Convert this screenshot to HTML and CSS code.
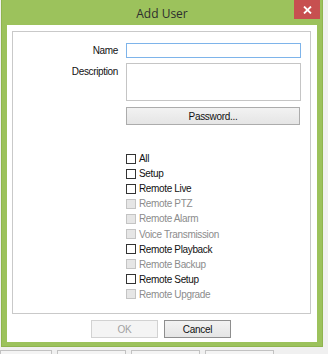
FILE: index.html
```html
<!DOCTYPE html>
<html>
<head>
<meta charset="utf-8">
<link rel="stylesheet" href="styles.css">
</head>
<body>
<div class="screen">
  <div class="window">
    <div class="titlebar">
      <span class="title">Add User</span>
      <div class="close">
        <svg width="9" height="8" viewBox="0 0 9 8"><path d="M1 0.5 L8 7.5 M8 0.5 L1 7.5" stroke="#fff" stroke-width="1.8"/></svg>
      </div>
    </div>
    <div class="client">
      <div class="panel">
        <div class="form">
          <label class="lbl lbl-name">Name</label>
          <div class="input focus"></div>
          <label class="lbl lbl-desc">Description</label>
          <div class="textarea"></div>
          <span></span>
          <button class="btn pwd">Password...</button>
        </div>
        <ul class="checks">
          <li class="chk"><span class="box"></span>All</li>
          <li class="chk"><span class="box"></span>Setup</li>
          <li class="chk"><span class="box"></span>Remote Live</li>
          <li class="chk off"><span class="box"></span>Remote PTZ</li>
          <li class="chk off"><span class="box"></span>Remote Alarm</li>
          <li class="chk off"><span class="box"></span>Voice Transmission</li>
          <li class="chk"><span class="box"></span>Remote Playback</li>
          <li class="chk off"><span class="box"></span>Remote Backup</li>
          <li class="chk"><span class="box"></span>Remote Setup</li>
          <li class="chk off"><span class="box"></span>Remote Upgrade</li>
        </ul>
      </div>
      <div class="actions">
        <button class="btn ok" disabled>OK</button>
        <button class="btn cancel">Cancel</button>
      </div>
    </div>
  </div>
  <div class="bgbar">
    <span class="bgbtn b1"></span>
    <span class="bgbtn b2"></span>
    <span class="bgbtn b3"></span>
    <span class="bgbtn b4"></span>
  </div>
</div>
</body>
</html>
```
FILE: styles.css
```css
* { box-sizing: border-box; }
html, body { margin: 0; padding: 0; }
body {
  width: 328px;
  height: 354px;
  overflow: hidden;
  background: #f0f0f0;
  font-family: "Liberation Sans", "DejaVu Sans", sans-serif;
  font-size: 10px;
  letter-spacing: -0.35px;
  color: #111;
}
.screen { position: relative; width: 328px; height: 354px; }
.window {
  margin-left: 1px;
  width: 322px;
  height: 347px;
  background: #9cc25c;
  border: 1px solid #8fb44f;
  border-top: none;
  padding: 0 5px 4px 5px;
  display: flex;
  flex-direction: column;
  position: relative;
}
.titlebar {
  height: 25px;
  display: flex;
  align-items: center;
  justify-content: center;
}
.title {
  font-family: "Open Sans", "Noto Sans", sans-serif;
  font-size: 12px;
  letter-spacing: 0;
  color: #2e2e2e;
  margin-top: 1px;
}
.close {
  position: absolute;
  left: 292px;
  top: 0;
  width: 26px;
  height: 19px;
  background: #c75050;
  display: flex;
  align-items: center;
  justify-content: center;
}
.client {
  flex: 1;
  background: #fff;
  padding: 6px 6px 0 5px;
  display: flex;
  flex-direction: column;
}
.panel {
  height: 283px;
  border: 1px solid #c9c9c9;
  padding: 11px 9px 0 0;
}
.form {
  display: grid;
  grid-template-columns: 105px 1fr;
  column-gap: 8px;
  row-gap: 5px;
}
.lbl {
  text-align: right;
  line-height: 15px;
}
.lbl-desc { line-height: 17px; }
.input {
  height: 15px;
  border: 1px solid #7eb4ea;
}
.textarea {
  height: 38px;
  border: 1px solid #c5c5c5;
  background: #fff;
}
.btn {
  font-family: "Liberation Sans", "DejaVu Sans", sans-serif;
  font-size: 10px;
  letter-spacing: -0.3px;
  color: #111;
  border: 1px solid #acacac;
  background: linear-gradient(#f2f2f2, #e5e5e5);
  padding: 0;
  border-radius: 0;
}
.pwd {
  height: 18px;
  margin-top: 1px;
  margin-right: 1px;
}
.checks {
  list-style: none;
  margin: 26px 0 0 113px;
  padding: 0;
}
.chk {
  height: 15.1px;
  display: flex;
  align-items: center;
  white-space: nowrap;
}
.box {
  width: 10px;
  height: 10px;
  border: 1px solid #333;
  background: #fff;
  margin-right: 3px;
  flex: none;
}
.chk.off { color: #8c8c8c; }
.chk.off .box { border-color: #c4c4c4; background: #e6e6e6; }
.actions {
  display: flex;
  justify-content: flex-start;
  gap: 6px;
  padding: 6px 0 0 79px;
}
.actions .btn { width: 67px; height: 18px; }
.btn.ok {
  color: #a2a2a2;
  background: #f4f4f4;
  border-color: #d2d2d2;
}
.btn.cancel { border-color: #8e8e8e; }
.bgbar {
  display: flex;
  gap: 5px;
  margin-top: 3px;
}
.bgbtn {
  height: 12px;
  border: 1px solid #c2c2c2;
  background: #f4f4f4;
}
.b1 { width: 52px; }
.b2 { width: 69px; }
.b3 { width: 69px; }
.b4 { width: 69px; }
```
